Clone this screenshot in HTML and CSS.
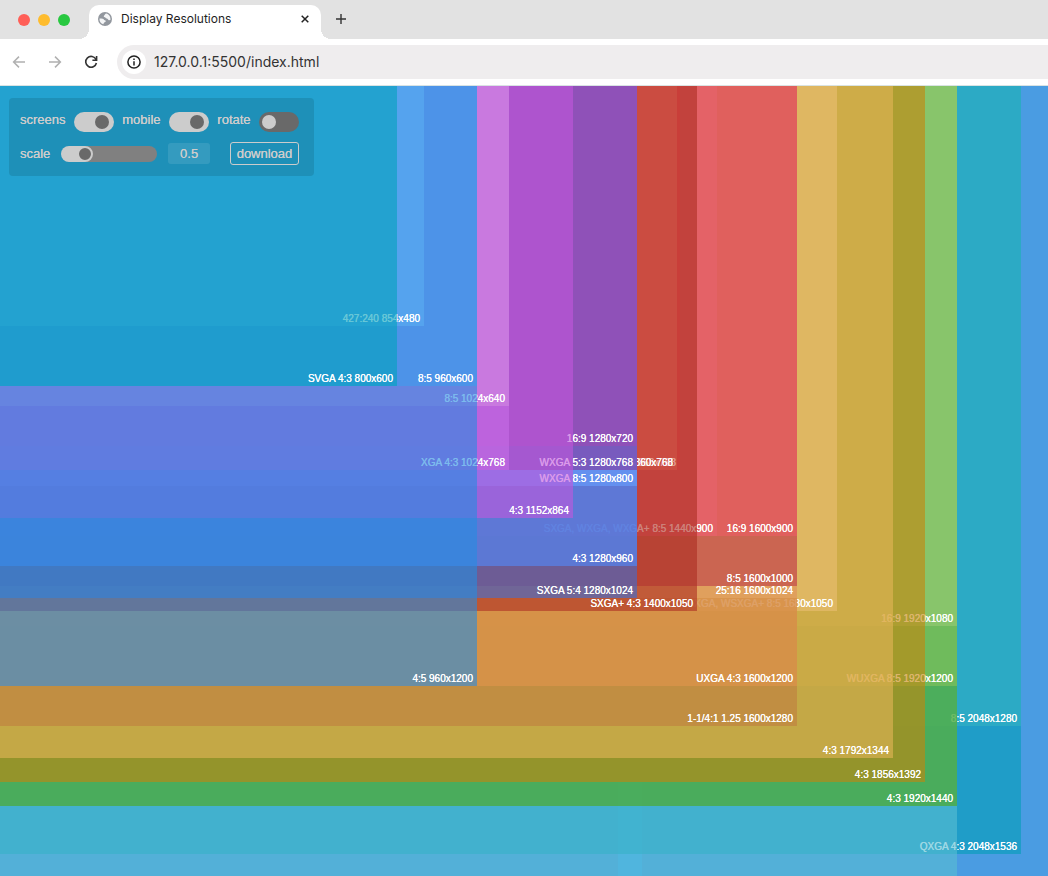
FILE: index.html
```html
<!DOCTYPE html>
<html lang="en">
<head>
<meta charset="utf-8">
<title>Display Resolutions</title>
<link rel="stylesheet" href="styles.css">
</head>
<body>
<header class="browser">
  <div class="tabbar">
    <div class="lights"><span class="light red"></span><span class="light amber"></span><span class="light green"></span></div>
    <div class="tab">
      <svg class="globe" viewBox="0 0 14 14" aria-hidden="true"><circle cx="7" cy="7" r="7" fill="#92979e"/><path d="M8 1.600C6.800 2.200 7 3 6.200 3.600c-.8.5-.5 1.700.6 1.700 1 0 .9 1.300 1.900 1.300s1.200.9 1.800 1.300c.6.500 1.400.2 1.900.1.500-3-1.400-5.800-4.400-6.400zM1.500 6.500c1.200 0 2.200.2 3.200.200 1.300 0 1 1.300 2.100 1.500 1.200.1 1.300 1.600.2 1.800-1 .1-.6 1.200-1.500 1.500l-.2.800C2.800 11.600 1.200 9.200 1.500 6.500z" fill="#f4f5f6"/></svg>
      <span class="tab-title">Display Resolutions</span>
      <button class="icon-button close" aria-label="Close tab"><svg width="8" height="8" viewBox="0 0 8 8"><path d="M.7.7l6.600 6.600M7.300.7L.7 7.300" stroke="#222" stroke-width="1.500"/></svg></button>
    </div>
    <button class="icon-button add" aria-label="New tab"><svg width="10" height="10" viewBox="0 0 10 10"><path d="M5 0v10M0 5h10" stroke="#333" stroke-width="1.400"/></svg></button>
  </div>
  <div class="toolbar">
    <button class="icon-button" aria-label="Back"><svg width="14" height="14" viewBox="0 0 14 14"><path d="M13 7H1.800M7 1.600L1.600 7 7 12.400" fill="none" stroke="#b0b0b0" stroke-width="1.500"/></svg></button>
    <button class="icon-button" aria-label="Forward"><svg width="14" height="14" viewBox="0 0 14 14"><path d="M1 7h11.200M7 1.600L12.400 7 7 12.400" fill="none" stroke="#b0b0b0" stroke-width="1.500"/></svg></button>
    <button class="icon-button" aria-label="Reload"><svg width="14" height="14" viewBox="0 0 14 14"><path d="M12 4.500A5.400 5.400 0 1 0 12.400 8M12.600 1v4.200H8.400" fill="none" stroke="#333" stroke-width="1.600"/></svg></button>
    <div class="address">
      <span class="info"><svg width="14" height="14" viewBox="0 0 14 14" aria-hidden="true"><circle cx="7" cy="7" r="6.100" fill="none" stroke="#222" stroke-width="1.500"/><path d="M7 6.200v4.200M7 3.500v1.500" stroke="#222" stroke-width="1.500"/></svg></span>
      <input class="url" aria-label="Address" value="127.0.0.1:5500/index.html">
    </div>
  </div>
</header>
<main class="stage" id="stage">
  <form class="controls">
    <div class="row toggles">
      <label for="screens">screens</label><input class="switch" type="checkbox" id="screens" checked>
      <label for="mobile">mobile</label><input class="switch" type="checkbox" id="mobile" checked>
      <label for="rotate">rotate</label><input class="switch" type="checkbox" id="rotate">
    </div>
    <div class="row">
      <label for="scale">scale</label>
      <input class="slider" type="range" id="scale" min="0" max="2" step="0.1" value="0.4">
      <input class="value" aria-label="Scale value" value="0.5">
      <button class="download" type="button">download</button>
    </div>
  </form>
</main>
<script src="screens.js"></script>
</body>
</html>
```

FILE: screens.js
```js
const scale = 0.5;
// tall screens run past the window's bottom edge and carry no label
const tall = [
  ["", 1290, 2796, "61 176 251"],
  ["", 1242, 2688, "80 148 216"]
];
// name, width, height, fill
const screens = [
  ["QXGA 4:3", 2048, 1536, "4 158 183"],
  ["8:5", 2048, 1280, "54 179 195"],
  ["", 1920, 2160, "90 190 210"],
  ["4:3", 1920, 1440, "80 169 16"],
  ["WUXGA 8:5", 1920, 1200, "135 195 92"],
  ["16:9", 1920, 1080, "153 203 117"],
  ["4:3", 1856, 1392, "198 132 10"],
  ["4:3", 1792, 1344, "228 182 88"],
  ["WSXGA, WSXGA+ 8:5", 1680, 1050, "235 190 117"],
  ["1-1/4:1 1.25", 1600, 1280, "192 125 63"],
  ["UXGA 4:3", 1600, 1200, "225 148 77"],
  ["25:16", 1600, 1024, "228 168 105"],
  ["8:5", 1600, 1000, "188 62 73"],
  ["16:9", 1600, 900, "238 93 102"],
  ["SXGA, WXGA, WXGA+ 8:5", 1440, 900, "230 100 110"],
  ["SXGA+ 4:3", 1400, 1050, "172 45 33"],
  ["16:9", 1366, 768, "205 60 55"],
  ["16:9", 1360, 768, "205 86 72"],
  ["SXGA 5:4", 1280, 1024, "58 110 215"],
  ["4:3", 1280, 960, "82 138 255"],
  ["WXGA 8:5", 1280, 800, "105 160 255"],
  ["WXGA 5:3", 1280, 768, "133 57 157"],
  ["16:9", 1280, 720, "158 75 180"],
  ["4:3", 1152, 864, "195 87 220"],
  ["XGA 4:3", 1024, 768, "198 110 232"],
  ["8:5", 1024, 640, "208 137 225"],
  ["4:5", 960, 1200, "37 140 225"],
  ["8:5", 960, 600, "60 157 237"],
  ["427:240", 854, 480, "92 173 242"],
  ["SVGA 4:3", 800, 600, "2 162 188"]
];
// wider screens are painted first
screens.sort((a, b) => b[1] - a[1] || b[2] - a[2]);
const stage = document.getElementById("stage");
for (const [name, width, height, fill] of [...tall, ...screens]) {
  const box = document.createElement("div");
  box.className = "screen";
  box.style.width = width * scale + "px";
  box.style.height = height * scale + "px";
  box.style.backgroundColor = `rgb(${fill} / 60%)`;
  if (name) box.textContent = `${name} ${width}x${height}`;
  stage.append(box);
}
```

FILE: styles.css
```css
* { box-sizing: border-box; }
body {
  margin: 0;
  min-height: 100vh;
  display: flex;
  flex-direction: column;
  font-family: "Liberation Sans", Arial, sans-serif;
}
button, input { font: inherit; margin: 0; }
.browser { font-family: Inter, sans-serif; background: #fff; border-bottom: 1px solid #d9e3e3; }
.tabbar { display: flex; height: 39px; background: #e2e2e2; }
.lights { display: flex; gap: 8px; align-items: center; padding: 0 19px 0 18px; width: 89px; }
.light { width: 12px; height: 12px; border-radius: 50%; }
.red { background: #ff5f57; }
.amber { background: #febc2e; }
.green { background: #28c840; }
.tab {
  position: relative;
  display: flex;
  align-items: center;
  width: 232px;
  margin-top: 5px;
  padding: 0 10px 6px 9px;
  background: #fff;
  border-radius: 10px 10px 0 0;
}
.tab::before, .tab::after {
  content: "";
  position: absolute;
  bottom: 0;
  width: 10px;
  height: 10px;
}
.tab::before { right: 100%; background: radial-gradient(circle at 0 0, #e2e2e2 10px, #fff 10px); }
.tab::after { left: 100%; background: radial-gradient(circle at 100% 0, #e2e2e2 10px, #fff 10px); }
.globe { width: 14px; height: 14px; }
.tab-title { flex: 1; margin-left: 9px; padding-bottom: 2px; font-size: 12px; color: #1f1f1f; }
.icon-button { display: flex; align-items: center; justify-content: center; padding: 0; border: 0; background: none; }
.close { width: 12px; height: 12px; }
.add { width: 40px; height: 38px; }
.toolbar { display: flex; align-items: center; gap: 22px; height: 46px; padding-left: 12px; }
.address { display: flex; flex: 1; align-items: center; height: 34px; margin-left: -3px; background: #efedee; border-radius: 17px 0 0 17px; }
.info { display: flex; align-items: center; justify-content: center; width: 24px; height: 24px; margin-left: 5px; background: #fff; border-radius: 50%; }
.url { flex: 1; min-width: 0; margin-left: 8px; padding: 0 0 2px; border: 0; background: none; font-size: 14px; color: #333; }
.stage { position: relative; flex: 1; overflow: hidden; background: #4a9ce2; }
.screen {
  position: absolute;
  top: 0;
  left: -3px;
  display: flex;
  align-items: flex-end;
  justify-content: flex-end;
  padding: 0 4px 1px 0;
  font-size: 10px;
  line-height: 12px;
  white-space: nowrap;
  color: #fff;
  text-shadow: 0 0 0 #fff;
}
.controls {
  position: relative;
  z-index: 1;
  display: flex;
  flex-direction: column;
  gap: 10px;
  width: 305px;
  margin: 12px 9px;
  padding: 14px 15px 11px 11px;
  border-radius: 4px;
  background: rgb(22 118 148 / 40%);
  color: #cccccc;
  font-size: 13px;
  text-shadow: 0 0 0 #ccc;
}
.row { display: flex; align-items: center; justify-content: space-between; }
.toggles label { margin-bottom: 5px; }
.switch {
  appearance: none;
  display: flex;
  align-items: center;
  width: 40px;
  height: 20px;
  padding: 0 3px;
  border-radius: 10px;
  background: #696969;
}
.switch::before { content: ""; width: 14px; height: 14px; border-radius: 50%; background: #ccc; }
.switch:checked { justify-content: flex-end; padding-right: 5px; background: #ccc; }
.switch:checked::before { background: #696969; }
.slider {
  appearance: none;
  width: 96px;
  height: 16px;
  border-radius: 8px;
  background: linear-gradient(to right, #ccc 24px, #808080 24px);
}
.slider::-webkit-slider-thumb {
  appearance: none;
  width: 16px;
  height: 16px;
  border: 2px solid #ccc;
  border-radius: 50%;
  background: #696969;
}
.value { width: 42px; height: 21px; padding: 0; border: 0; border-radius: 3px; background: rgb(255 255 255 / 10%); color: #ccc; text-align: center; text-shadow: inherit; }
.download { width: 69px; height: 23px; margin-left: 9px; padding: 0; border: 1px solid #ccc; border-radius: 3px; background: none; color: #ccc; text-shadow: inherit; }
```
